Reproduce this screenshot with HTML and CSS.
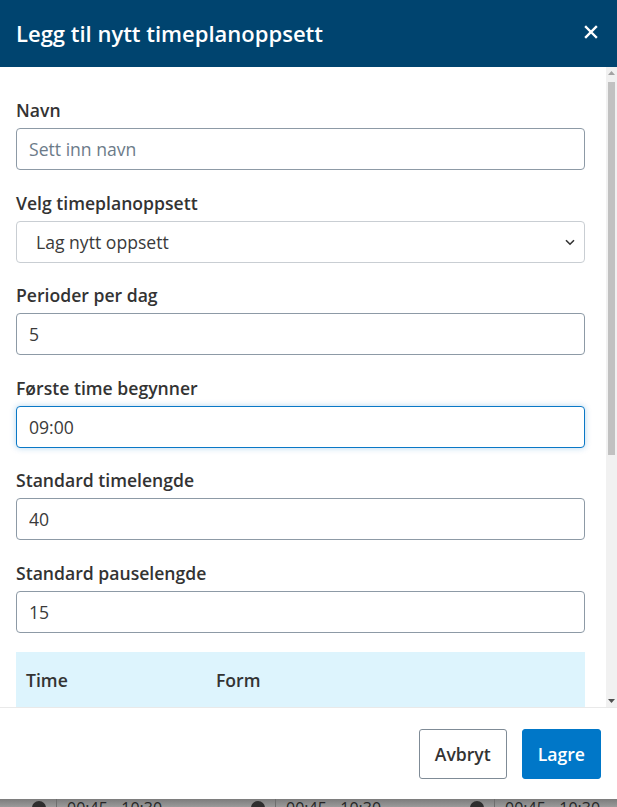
FILE: index.html
```html
<!DOCTYPE html>
<html lang="no">
<head>
    <meta charset="UTF-8">
    <meta name="viewport" content="width=device-width, initial-scale=1.0">
    <title>Legg til nytt timeplanoppsett</title>
    <link rel="stylesheet" href="styles.css">
</head>
<body>
    <div class="modal">
        <!-- Header -->
        <div class="modal-header">
            <h1>Legg til nytt timeplanoppsett</h1>
            <button class="close-btn" aria-label="Lukk">
                <svg width="14" height="14" viewBox="0 0 14 14">
                    <path d="M2 2 L12 12 M12 2 L2 12" stroke="#fff" stroke-width="2.4" stroke-linecap="square"/>
                </svg>
            </button>
        </div>

        <!-- Form area with its scrollbar -->
        <div class="modal-main">
            <div class="modal-body">
                <div class="form-group">
                    <label for="navn">Navn</label>
                    <input type="text" id="navn" placeholder="Sett inn navn">
                </div>
                <div class="form-group">
                    <label for="oppsett">Velg timeplanoppsett</label>
                    <div class="select-wrap">
                        <select id="oppsett">
                            <option selected>Lag nytt oppsett</option>
                        </select>
                        <svg class="chevron" width="10" height="7" viewBox="0 0 10 7">
                            <path d="M1 1.2 L5 5.2 L9 1.2" fill="none" stroke="#333" stroke-width="1.6"/>
                        </svg>
                    </div>
                </div>
                <div class="form-group">
                    <label for="perioder">Perioder per dag</label>
                    <input type="text" id="perioder" value="5">
                </div>
                <div class="form-group">
                    <label for="start">Første time begynner</label>
                    <input type="text" id="start" class="is-focused" value="09:00">
                </div>
                <div class="form-group">
                    <label for="timelengde">Standard timelengde</label>
                    <input type="text" id="timelengde" value="40">
                </div>
                <div class="form-group last">
                    <label for="pauselengde">Standard pauselengde</label>
                    <input type="text" id="pauselengde" value="15">
                </div>

                <table class="period-table">
                    <thead>
                        <tr>
                            <th class="col-time">Time</th>
                            <th>Form</th>
                        </tr>
                    </thead>
                </table>
            </div>

            <div class="scrollbar">
                <div class="scroll-btn">
                    <svg width="7" height="4" viewBox="0 0 7 4"><path d="M0 4 L3.5 0 L7 4 Z" fill="#a3a3a3"/></svg>
                </div>
                <div class="scroll-track">
                    <div class="scroll-thumb"></div>
                </div>
                <div class="scroll-btn">
                    <svg width="7" height="4" viewBox="0 0 7 4"><path d="M0 0 L3.5 4 L7 0 Z" fill="#505050"/></svg>
                </div>
            </div>
        </div>

        <!-- Footer -->
        <div class="modal-footer">
            <button class="btn btn-outline">Avbryt</button>
            <button class="btn btn-primary">Lagre</button>
        </div>
    </div>

    <!-- Page behind the modal -->
    <div class="page-peek">
        <div class="peek-cell"><span>09:45 - 10:30</span><i class="peek-icon"></i></div>
        <div class="peek-cell"><span>00:45 - 10:30</span><i class="peek-icon"></i></div>
        <div class="peek-cell"><span>00:45 - 10:30</span><i class="peek-icon"></i></div>
        <div class="peek-cell"><span>00:45 - 10:30</span><i class="peek-icon"></i></div>
    </div>
</body>
</html>
```

FILE: styles.css
```css
* {
    box-sizing: border-box;
}

html, body {
    margin: 0;
    padding: 0;
    height: 807px;
    overflow: hidden;
}

body {
    font-family: "Open Sans", "Noto Sans", sans-serif;
    color: #333;
    background: #8e8e8e;
}

.modal {
    display: flex;
    flex-direction: column;
    height: 799px;
    background: #fff;
}

/* Header */
.modal-header {
    height: 67px;
    flex: none;
    display: flex;
    align-items: center;
    justify-content: space-between;
    padding: 0 19px 0 16px;
    background: #00446f;
}

.modal-header h1 {
    margin: 0;
    font-size: 22px;
    font-weight: 600;
    color: #fff;
    padding-bottom: 2px;
}

.close-btn {
    background: none;
    border: none;
    padding: 0;
    width: 14px;
    height: 14px;
    margin-bottom: 4px;
    cursor: pointer;
    display: flex;
}

/* Body + scrollbar */
.modal-main {
    flex: 1;
    min-height: 0;
    display: flex;
}

.modal-body {
    flex: 1;
    overflow: hidden;
    padding: 31px 21px 0 16px;
}

.scrollbar {
    flex: none;
    width: 11px;
    display: flex;
    flex-direction: column;
    background: #f1f1f1;
}

.scroll-btn {
    height: 12px;
    display: flex;
    align-items: center;
    justify-content: center;
}

.scroll-track {
    flex: 1;
    padding: 3px 2px 0 2px;
}

.scroll-thumb {
    height: 373px;
    background: #c1c1c1;
}

/* Form */
.form-group {
    margin-bottom: 20.6px;
}

.form-group.last {
    margin-bottom: 19px;
}

.form-group label {
    display: block;
    font-size: 17.6px;
    font-weight: 600;
    line-height: 24px;
    margin-bottom: 6px;
    color: #333;
}

input, select {
    display: block;
    width: 100%;
    height: 42px;
    padding: 0 12px;
    font-family: inherit;
    font-size: 17.6px;
    color: #3a3a3a;
    background: #fff;
    border: 1px solid #8d9aa6;
    border-radius: 4px;
    outline: none;
}

input::placeholder {
    color: #6c7b89;
}

.is-focused {
    border-color: #0a78c6;
    box-shadow: 0 0 6px rgba(10, 120, 198, 0.3);
}

.select-wrap {
    position: relative;
}

select {
    appearance: none;
    -webkit-appearance: none;
    padding-left: 19px;
    border-color: #c9ced3;
}

.chevron {
    position: absolute;
    right: 10px;
    top: 18px;
    pointer-events: none;
}

/* Period table */
.period-table {
    width: 100%;
    border-collapse: collapse;
}

.period-table th {
    height: 56px;
    padding: 0 10px;
    text-align: left;
    font-size: 17.6px;
    font-weight: 600;
    background: #ddf4fd;
    color: #333;
}

.period-table .col-time {
    width: 190px;
}

/* Footer */
.modal-footer {
    flex: none;
    height: 92px;
    display: flex;
    align-items: flex-start;
    justify-content: flex-end;
    gap: 15px;
    padding: 21px 16px 0 0;
    border-top: 1px solid #e9e9e9;
}

.btn {
    height: 50px;
    padding: 0 15px;
    font-family: inherit;
    font-size: 17.6px;
    font-weight: 600;
    border-radius: 3px;
    cursor: pointer;
}

.btn-outline {
    background: #fff;
    color: #333;
    border: 1px solid #7f8b96;
}

.btn-primary {
    background: #0077c8;
    color: #fff;
    border: 1px solid #0077c8;
    padding: 0 15px;
}

/* Page behind the modal */
.page-peek {
    height: 8px;
    display: flex;
    overflow: hidden;
    background: linear-gradient(#7c7c7c, #9a9a9a);
}

.peek-cell {
    flex: none;
    width: 219px;
    display: flex;
    justify-content: space-between;
    padding: 0 10px 0 10px;
    border-right: 1px solid #6e6e6e;
    font-size: 16px;
    line-height: 24px;
    margin-top: -3px;
    color: #262626;
}

.peek-cell:first-child {
    margin-left: -162px;
}

.peek-icon {
    width: 14px;
    height: 14px;
    margin-top: 5px;
    border-radius: 50%;
    background: #2e2e2e;
}
```
